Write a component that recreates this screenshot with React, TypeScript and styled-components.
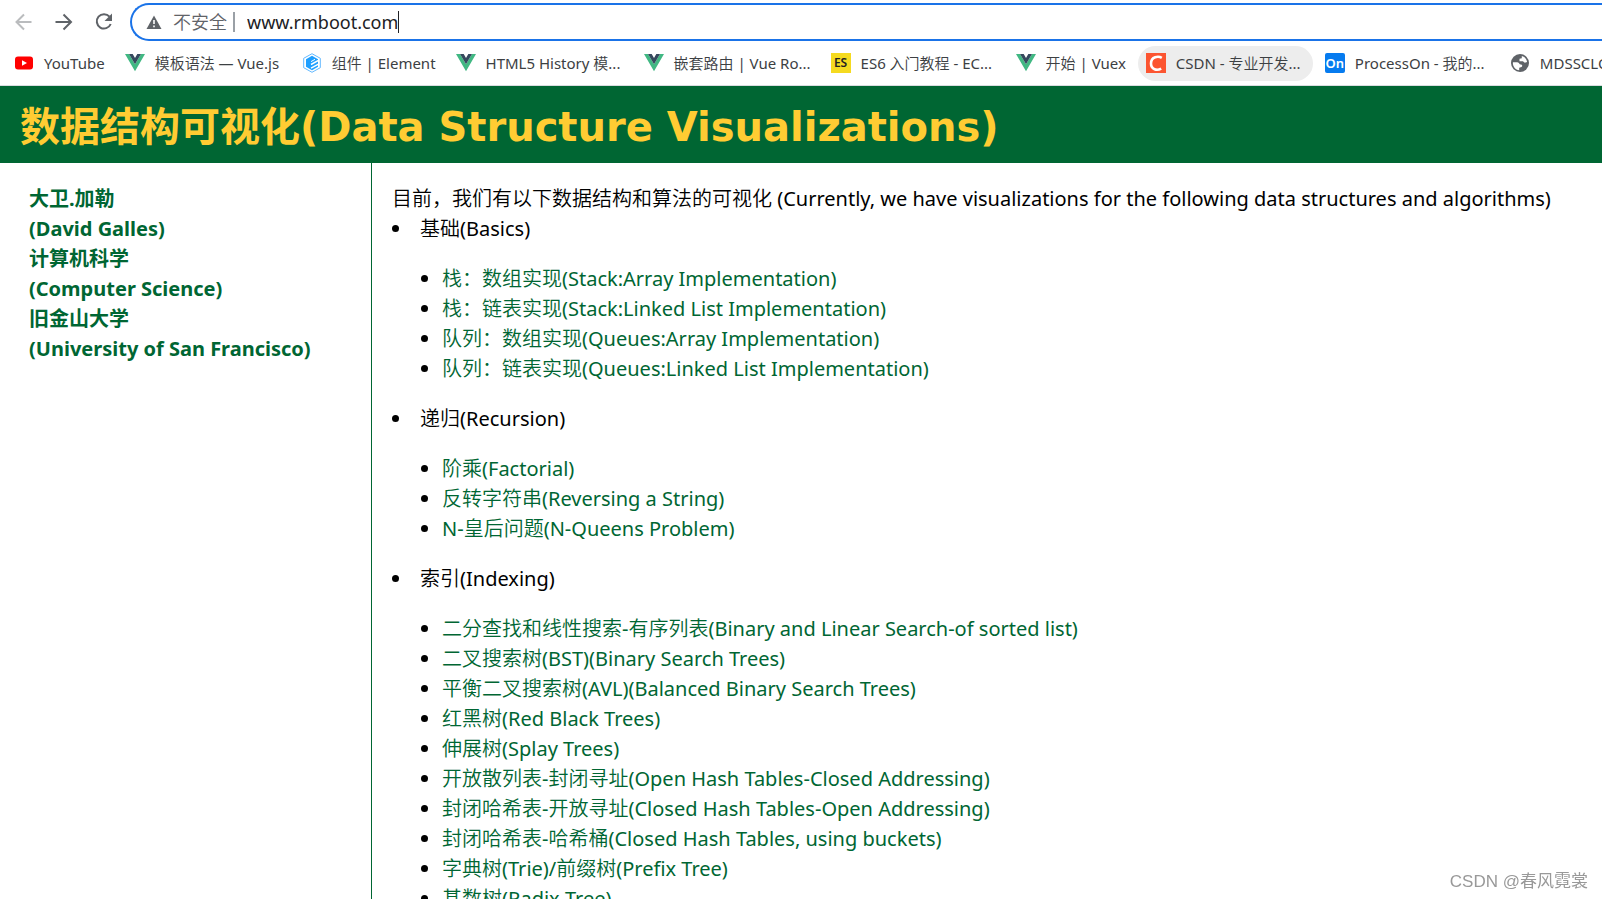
import React from "react";
import styled, { createGlobalStyle } from "styled-components";

const GlobalStyle = createGlobalStyle`
  * { box-sizing: border-box; }
  body {
    margin: 0;
    background: #fff;
    font-family: "Noto Sans", "Noto Sans CJK SC DemiLight", "Noto Sans CJK SC Light", "Noto Sans CJK SC", sans-serif;
  }
`;

const Browser = styled.div`
  display: flex;
  flex-direction: column;
  height: 100vh;
  overflow: hidden;
`;

const Toolbar = styled.div`
  display: flex;
  align-items: center;
  height: 44px;
  padding-left: 12px;
  gap: 16px;
`;

const NavButton = styled.button<{ $dim?: boolean }>`
  display: flex;
  flex: none;
  width: 24px;
  height: 24px;
  padding: 0;
  border: 0;
  background: none;
  color: ${(p) => (p.$dim ? "#babcbe" : "#5f6368")};
`;

const AddressBar = styled.label`
  display: flex;
  align-items: center;
  flex: 1;
  height: 38px;
  margin-left: -2px;
  padding-left: 14px;
  border: 2px solid #1a73e8;
  border-right: 0;
  border-radius: 19px 0 0 19px;
  font-size: 18px;
  line-height: 24px;
  color: #5f6368;
`;

const Insecure = styled.span`
  margin-left: 11px;
`;

const Divider = styled.span`
  width: 2px;
  height: 20px;
  margin: 0 12px 0 6px;
  background: #9aa0a6;
`;

const UrlInput = styled.input`
  field-sizing: content;
  padding: 0;
  border: 0;
  outline: 0;
  background: none;
  font: inherit;
  color: #202124;
`;

const Caret = styled.span`
  width: 1px;
  height: 22px;
  background: #202124;
`;

const BookmarkBar = styled.nav`
  display: flex;
  align-items: center;
  height: 42px;
  flex: none;
  padding: 0 0 3px 6px;
  gap: 4px;
  overflow: hidden;
  border-bottom: 1px solid #dadce0;
`;

const Bookmark = styled.a<{ $active?: boolean }>`
  display: flex;
  align-items: center;
  flex: none;
  gap: 10px;
  height: 35px;
  padding: 0 8px;
  border-radius: 18px;
  background: ${(p) => (p.$active ? "#ededed" : "none")};
  font-size: 15px;
  line-height: 20px;
  white-space: nowrap;
  text-decoration: none;
  color: #3c4043;
`;

const BookmarkLabel = styled.span<{ $width: number }>`
  min-width: ${(p) => p.$width}px;
`;

const Tile = styled.span<{ $bg: string; $fg: string; $round?: number; $size: number }>`
  display: flex;
  align-items: center;
  justify-content: center;
  width: 20px;
  height: 20px;
  border-radius: ${(p) => p.$round ?? 0}px;
  background: ${(p) => p.$bg};
  color: ${(p) => p.$fg};
  font-size: ${(p) => p.$size}px;
  font-weight: 600;
`;

const Banner = styled.header`
  flex: none;
  height: 77px;
  padding: 3px 20px 0;
  background: #006633;
`;

const Title = styled.h1`
  margin: 0;
  font-family: "DejaVu Sans", "Noto Sans CJK SC", sans-serif;
  font-size: 40px;
  line-height: 76px;
  font-weight: 700;
  white-space: nowrap;
  color: #ffcc33;
`;

const Columns = styled.div`
  display: flex;
  flex: 1;
  min-height: 0;
  overflow: hidden;
  font-size: 20px;
  line-height: 30px;
`;

const Sidebar = styled.aside`
  flex: none;
  width: 372px;
  padding: 21px 29px;
  border-right: 1px solid #006633;
  font-family: "Noto Sans", "Noto Sans CJK SC", sans-serif;
  font-weight: 700;
  color: #006633;
`;

const Content = styled.main`
  flex: 1;
  padding: 21px 20px;
  color: #000;
  white-space: nowrap;
`;

const Topics = styled.ul`
  margin: 0;
  padding: 0;
  list-style: disc inside;
`;

const Algorithms = styled.ul`
  margin: 20px 0;
  padding-left: 50px;
  list-style: disc outside;
`;

const AlgorithmLink = styled.a`
  color: #006633;
  text-decoration: none;
`;

const Watermark = styled.div`
  position: fixed;
  right: 14px;
  bottom: 5px;
  font-size: 17px;
  line-height: 24px;
  font-family: "Liberation Sans", "Noto Sans CJK SC", sans-serif;
  color: #999;
`;

const VueIcon = () => (
  <svg width="20" height="20" viewBox="0 0 20 20">
    <path d="M0 1h4l6 10.300L16 1h4L10 18.300z" fill="#41b883" />
    <path d="M4 1h3.700L10 5l2.300-4H16L10 11.300z" fill="#35495e" />
  </svg>
);

const YouTubeIcon = () => (
  <svg width="20" height="20" viewBox="0 0 20 20">
    <rect x="1" y="3.500" width="18" height="13" rx="3" fill="#f00" />
    <path d="M8 7.200v5.600l5-2.800z" fill="#fff" />
  </svg>
);

const ElementIcon = () => (
  <svg width="20" height="20" viewBox="0 0 20 20">
    <path d="M10 .7l8.300 4.600v9.400L10 19.300l-8.300-4.600V5.300z" fill="#fff" stroke="#62b8ff" />
    <path d="M10 2.800l6 3.400v7.600l-6 3.400-6-3.400V6.200z" fill="#1e9fff" />
    <path d="M16.500 7.300L9 11.500M16.500 11.200L9 15.200" fill="none" stroke="#fff" strokeWidth="1.500" />
    <path d="M9 8.600l4-2.300" stroke="#fff" strokeWidth="1" />
  </svg>
);

const GlobeIcon = () => (
  <svg width="20" height="20" viewBox="0 0 20 20">
    <circle cx="10" cy="10" r="9" fill="#5f6368" />
    <path d="M2.900 9.200H7c2 0 2.200 2.200 3.800 2.400 1.700.2 1.900 1.600.8 2.300l-2.400.8v2.500C5.500 17 2.500 13.500 2.900 9.200z" fill="#fff" />
    <path d="M11.800 3c2.700.6 4.800 2.900 5.300 6l-2.300.8-1.900-1.600H9.500V5.800l2.300-.6z" fill="#fff" />
  </svg>
);

const CsdnIcon = () => (
  <svg width="20" height="20" viewBox="0 0 20 20">
    <rect width="20" height="20" fill="#fc5531" />
    <path d="M15.800 4.800C12.500 2.800 5 3.200 5 10.600c0 6.200 6 7.200 10.200 5" fill="none" stroke="#fff" strokeWidth="2.600" />
  </svg>
);

const bookmarks: { label: string; width: number; icon: React.ReactNode; active?: boolean }[] = [
  { label: "YouTube", width: 60, icon: <YouTubeIcon /> },
  { label: "模板语法 — Vue.js", width: 127, icon: <VueIcon /> },
  { label: "组件 | Element", width: 102, icon: <ElementIcon /> },
  { label: "HTML5 History 模...", width: 138, icon: <VueIcon /> },
  { label: "嵌套路由 | Vue Ro...", width: 136, icon: <VueIcon /> },
  { label: "ES6 入门教程 - EC...", width: 135, icon: <Tile $bg="#f5da20" $fg="#222" $size={12}>ES</Tile> },
  { label: "开始 | Vuex", width: 79, icon: <VueIcon /> },
  { label: "CSDN - 专业开发...", width: 129, icon: <CsdnIcon />, active: true },
  { label: "ProcessOn - 我的...", width: 135, icon: <Tile $bg="#067bef" $fg="#fff" $round={2} $size={13}>On</Tile> },
  { label: "MDSSCLOUD", width: 80, icon: <GlobeIcon /> },
];

const author = [
  "大卫.加勒",
  "(David Galles)",
  "计算机科学",
  "(Computer Science)",
  "旧金山大学",
  "(University of San Francisco)",
];

const topics = [
  {
    name: "基础(Basics)",
    items: [
      "栈：数组实现(Stack:Array Implementation)",
      "栈：链表实现(Stack:Linked List Implementation)",
      "队列：数组实现(Queues:Array Implementation)",
      "队列：链表实现(Queues:Linked List Implementation)",
    ],
  },
  {
    name: "递归(Recursion)",
    items: [
      "阶乘(Factorial)",
      "反转字符串(Reversing a String)",
      "N-皇后问题(N-Queens Problem)",
    ],
  },
  {
    name: "索引(Indexing)",
    items: [
      "二分查找和线性搜索-有序列表(Binary and Linear Search-of sorted list)",
      "二叉搜索树(BST)(Binary Search Trees)",
      "平衡二叉搜索树(AVL)(Balanced Binary Search Trees)",
      "红黑树(Red Black Trees)",
      "伸展树(Splay Trees)",
      "开放散列表-封闭寻址(Open Hash Tables-Closed Addressing)",
      "封闭哈希表-开放寻址(Closed Hash Tables-Open Addressing)",
      "封闭哈希表-哈希桶(Closed Hash Tables, using buckets)",
      "字典树(Trie)/前缀树(Prefix Tree)",
      "基数树(Radix Tree)",
    ],
  },
];

export default function App() {
  return (
    <Browser lang="zh-CN">
      <GlobalStyle />
      <Toolbar>
        <NavButton $dim aria-label="后退">
          <svg width="24" height="24" viewBox="0 0 24 24" fill="none" stroke="currentColor" strokeWidth="2">
            <path d="M19.500 12H4.500M12 4.500L4.500 12l7.500 7.500" />
          </svg>
        </NavButton>
        <NavButton aria-label="前进">
          <svg width="24" height="24" viewBox="0 0 24 24" fill="none" stroke="currentColor" strokeWidth="2">
            <path d="M3.500 12h15M11.500 4.500L19 12l-7.500 7.500" />
          </svg>
        </NavButton>
        <NavButton aria-label="重新加载">
          <svg width="24" height="24" viewBox="0 0 24 24">
            <path d="M17.500 6.700A7.200 7.200 0 1 0 18.700 14" fill="none" stroke="currentColor" strokeWidth="2" />
            <path d="M20 3.500V11h-7.500z" fill="currentColor" />
          </svg>
        </NavButton>
        <AddressBar>
          <svg width="16" height="16" viewBox="0 0 16 16">
            <path d="M8 1.500L15.500 15H.5z" fill="#5f6368" />
            <path d="M8 6v4M8 11.500v1.700" stroke="#fff" strokeWidth="1.600" />
          </svg>
          <Insecure>不安全</Insecure>
          <Divider />
          <UrlInput type="text" aria-label="网址" defaultValue="www.rmboot.com" />
          <Caret />
        </AddressBar>
      </Toolbar>
      <BookmarkBar>
        {bookmarks.map((b) => (
          <Bookmark key={b.label} href="#" $active={b.active}>
            {b.icon}
            <BookmarkLabel $width={b.width}>{b.label}</BookmarkLabel>
          </Bookmark>
        ))}
      </BookmarkBar>
      <Banner>
        <Title>数据结构可视化(Data Structure Visualizations)</Title>
      </Banner>
      <Columns>
        <Sidebar>
          {author.map((line) => (
            <div key={line}>{line}</div>
          ))}
        </Sidebar>
        <Content>
          <div>
            目前，我们有以下数据结构和算法的可视化 (Currently, we have visualizations for the following data structures and algorithms)
          </div>
          <Topics>
            {topics.map((t) => (
              <li key={t.name}>
                {t.name}
                <Algorithms>
                  {t.items.map((item) => (
                    <li key={item}>
                      <AlgorithmLink href="#">{item}</AlgorithmLink>
                    </li>
                  ))}
                </Algorithms>
              </li>
            ))}
          </Topics>
        </Content>
      </Columns>
      <Watermark>CSDN @春风霓裳</Watermark>
    </Browser>
  );
}
